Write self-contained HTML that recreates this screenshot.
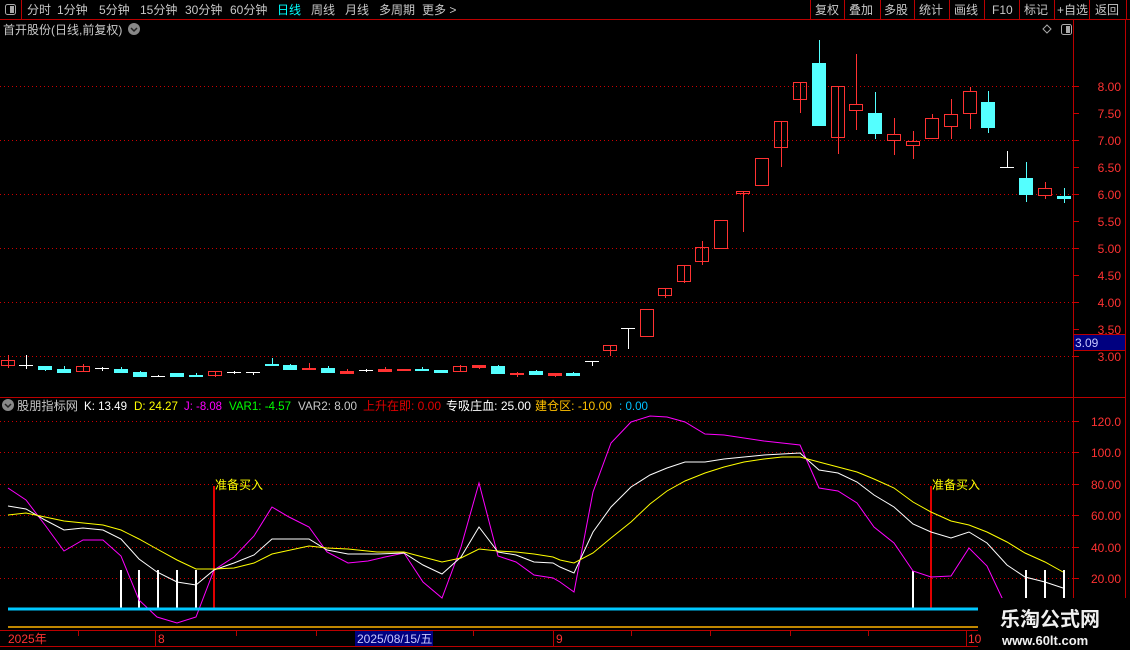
<!DOCTYPE html>
<html><head><meta charset="utf-8"><style>
html,body{margin:0;padding:0;background:#000;}
body{width:1130px;height:650px;overflow:hidden;position:relative;font-family:"Liberation Sans","Noto Sans CJK SC",sans-serif;}
svg{position:absolute;left:0;top:0;}
text{font-family:"Liberation Sans","Noto Sans CJK SC",sans-serif;}
</style></head><body>
<svg width="1130" height="650" viewBox="0 0 1130 650" xmlns="http://www.w3.org/2000/svg">
<rect width="1130" height="650" fill="#000"/>
<line x1="0" y1="19.5" x2="1130" y2="19.5" stroke="#b00" />
<line x1="21.5" y1="0" x2="21.5" y2="19" stroke="#b00"/>
<rect x="5.5" y="4.5" width="10" height="10" rx="2" fill="none" stroke="#aaa"/>
<rect x="10" y="6" width="4" height="7" fill="#aaa"/>
<g font-size="12" fill="#c8c8c8">
<text x="27" y="14">分时</text><text x="57" y="14">1分钟</text><text x="99" y="14">5分钟</text><text x="140" y="14">15分钟</text><text x="185" y="14">30分钟</text><text x="230" y="14">60分钟</text>
<text x="277" y="14" fill="#00ffff">日线</text><text x="311" y="14">周线</text><text x="345" y="14">月线</text><text x="379" y="14">多周期</text><text x="422" y="14">更多 &gt;</text>
</g>
<g stroke="#b00">
<line x1="810.5" y1="0" x2="810.5" y2="19"/><line x1="844.5" y1="0" x2="844.5" y2="19"/><line x1="880.5" y1="0" x2="880.5" y2="19"/><line x1="914.5" y1="0" x2="914.5" y2="19"/><line x1="949.5" y1="0" x2="949.5" y2="19"/><line x1="984.5" y1="0" x2="984.5" y2="19"/><line x1="1019.5" y1="0" x2="1019.5" y2="19"/><line x1="1054.5" y1="0" x2="1054.5" y2="19"/><line x1="1089.5" y1="0" x2="1089.5" y2="19"/><line x1="1126.5" y1="0" x2="1126.5" y2="19"/>
</g>
<g font-size="12" fill="#c8c8c8">
<text x="815" y="14">复权</text><text x="849" y="14">叠加</text><text x="884" y="14">多股</text><text x="919" y="14">统计</text><text x="954" y="14">画线</text><text x="992" y="14">F10</text><text x="1024" y="14">标记</text><text x="1057" y="14">+自选</text><text x="1095" y="14">返回</text>
</g>
<text x="3" y="34" font-size="12" fill="#c8c8c8">首开股份(日线,前复权)</text>
<circle cx="134" cy="29" r="6" fill="#888"/><path d="M131 28 L134 31 L137 28" stroke="#222" stroke-width="1.5" fill="none"/>
<path d="M1047 25 L1051 29 L1047 33 L1043 29 Z" fill="none" stroke="#aaa"/>
<rect x="1061.5" y="24.5" width="10" height="10" rx="2" fill="none" stroke="#aaa"/><rect x="1066" y="26" width="4" height="7" fill="#aaa"/>
<line x1="1073.5" y1="20" x2="1073.5" y2="631" stroke="#b00"/>
<line x1="1125.5" y1="20" x2="1125.5" y2="631" stroke="#b00"/>
<line x1="0" y1="397.5" x2="1126" y2="397.5" stroke="#b00"/>
<line x1="0" y1="630.5" x2="1130" y2="630.5" stroke="#b00"/>
<g stroke="#c00" stroke-dasharray="1 3">
<line x1="0" y1="86.5" x2="1073" y2="86.5"/><line x1="0" y1="140.5" x2="1073" y2="140.5"/><line x1="0" y1="194.5" x2="1073" y2="194.5"/><line x1="0" y1="248.5" x2="1073" y2="248.5"/><line x1="0" y1="302.5" x2="1073" y2="302.5"/><line x1="0" y1="356.5" x2="1073" y2="356.5"/>
<line x1="0" y1="421.5" x2="1073" y2="421.5"/><line x1="0" y1="452.5" x2="1073" y2="452.5"/><line x1="0" y1="484.5" x2="1073" y2="484.5"/><line x1="0" y1="515.5" x2="1073" y2="515.5"/><line x1="0" y1="547.5" x2="1073" y2="547.5"/><line x1="0" y1="578.5" x2="1073" y2="578.5"/>
</g>
<g stroke="#c00">
<line x1="1073" y1="86.5" x2="1079" y2="86.5"/><line x1="1073" y1="113.5" x2="1079" y2="113.5"/><line x1="1073" y1="140.5" x2="1079" y2="140.5"/><line x1="1073" y1="167.5" x2="1079" y2="167.5"/><line x1="1073" y1="194.5" x2="1079" y2="194.5"/><line x1="1073" y1="221.5" x2="1079" y2="221.5"/><line x1="1073" y1="248.5" x2="1079" y2="248.5"/><line x1="1073" y1="275.5" x2="1079" y2="275.5"/><line x1="1073" y1="302.5" x2="1079" y2="302.5"/><line x1="1073" y1="329.5" x2="1079" y2="329.5"/><line x1="1073" y1="356.5" x2="1079" y2="356.5"/>
<line x1="1073" y1="421.5" x2="1079" y2="421.5"/><line x1="1073" y1="452.5" x2="1079" y2="452.5"/><line x1="1073" y1="484.5" x2="1079" y2="484.5"/><line x1="1073" y1="515.5" x2="1079" y2="515.5"/><line x1="1073" y1="547.5" x2="1079" y2="547.5"/><line x1="1073" y1="578.5" x2="1079" y2="578.5"/>
</g>
<g font-size="12" fill="#ff3232" text-anchor="end">
<text x="1121" y="91">8.00</text><text x="1121" y="118">7.50</text><text x="1121" y="145">7.00</text><text x="1121" y="172">6.50</text><text x="1121" y="199">6.00</text><text x="1121" y="226">5.50</text><text x="1121" y="253">5.00</text><text x="1121" y="280">4.50</text><text x="1121" y="307">4.00</text><text x="1121" y="334">3.50</text><text x="1121" y="361">3.00</text>
<text x="1121" y="426">120.0</text><text x="1121" y="457">100.0</text><text x="1121" y="489">80.00</text><text x="1121" y="520">60.00</text><text x="1121" y="552">40.00</text><text x="1121" y="583">20.00</text>
</g>
<rect x="1073.5" y="334.5" width="52" height="16" fill="#000080" stroke="#b00"/>
<text x="1075" y="347" font-size="12" fill="#c8c8ff">3.09</text>
<g stroke-width="1" shape-rendering="crispEdges">
<g stroke="#ff3232" fill="none">
<line x1="8.5" y1="355" x2="8.5" y2="368"/><rect x="1.5" y="360.5" width="13" height="5"/>
<line x1="83.5" y1="364" x2="83.5" y2="372"/><rect x="76.5" y="366.5" width="13" height="5"/>
<line x1="215.5" y1="371" x2="215.5" y2="377"/><rect x="208.5" y="371.5" width="13" height="4"/>
<line x1="460.5" y1="365" x2="460.5" y2="372"/><rect x="453.5" y="366.5" width="13" height="5"/>
<line x1="610.5" y1="345" x2="610.5" y2="356"/><rect x="603.5" y="345.5" width="13" height="5"/>
<rect x="640.5" y="309.5" width="13" height="27"/>
<line x1="665.5" y1="288" x2="665.5" y2="298"/><rect x="658.5" y="288.5" width="13" height="7"/>
<line x1="684.5" y1="265" x2="684.5" y2="283"/><rect x="677.5" y="265.5" width="13" height="16"/>
<line x1="702.5" y1="241" x2="702.5" y2="265"/><rect x="695.5" y="247.5" width="13" height="14"/>
<rect x="714.5" y="220.5" width="13" height="28"/>
<line x1="743.5" y1="191" x2="743.5" y2="232"/><rect x="736.5" y="191.5" width="13" height="2"/>
<rect x="755.5" y="158.5" width="13" height="27"/>
<line x1="781.5" y1="121" x2="781.5" y2="167"/><rect x="774.5" y="121.5" width="13" height="26"/>
<line x1="800.5" y1="82" x2="800.5" y2="113"/><rect x="793.5" y="82.5" width="13" height="17"/>
<line x1="838.5" y1="86" x2="838.5" y2="154"/><rect x="831.5" y="86.5" width="13" height="51"/>
<line x1="856.5" y1="54" x2="856.5" y2="130"/><rect x="849.5" y="104.5" width="13" height="6" fill="#000"/>
<line x1="894.5" y1="118" x2="894.5" y2="155"/><rect x="887.5" y="134.5" width="13" height="6" fill="#000"/>
<line x1="913.5" y1="131" x2="913.5" y2="159"/><rect x="906.5" y="141.5" width="13" height="4" fill="#000"/>
<line x1="932.5" y1="114" x2="932.5" y2="138"/><rect x="925.5" y="118.5" width="13" height="20" fill="#000"/>
<line x1="951.5" y1="99" x2="951.5" y2="139"/><rect x="944.5" y="114.5" width="13" height="12" fill="#000"/>
<line x1="970.5" y1="87" x2="970.5" y2="129"/><rect x="963.5" y="91.5" width="13" height="22" fill="#000"/>
<line x1="1045.5" y1="182" x2="1045.5" y2="199"/><rect x="1038.5" y="188.5" width="13" height="7" fill="#000"/>
</g>
<g fill="#ff3232" stroke="#ff3232">
<line x1="309.5" y1="363" x2="309.5" y2="369"/><rect x="302.5" y="368.5" width="13" height="1"/>
<line x1="347.5" y1="369" x2="347.5" y2="373"/><rect x="340.5" y="371.5" width="13" height="2"/>
<line x1="385.5" y1="367" x2="385.5" y2="371"/><rect x="378.5" y="369.5" width="13" height="2"/>
<line x1="404.5" y1="369" x2="404.5" y2="371"/><rect x="397.5" y="369.5" width="13" height="1"/>
<line x1="479.5" y1="365" x2="479.5" y2="369"/><rect x="472.5" y="365.5" width="13" height="2"/>
<line x1="517.5" y1="372" x2="517.5" y2="377"/><rect x="510.5" y="373.5" width="13" height="1"/>
<line x1="555.5" y1="373" x2="555.5" y2="377"/><rect x="548.5" y="373.5" width="13" height="2"/>
</g>
<g fill="#54ffff" stroke="#54ffff">
<line x1="45.5" y1="366" x2="45.5" y2="371"/><rect x="38.5" y="366.5" width="13" height="3"/>
<line x1="64.5" y1="366" x2="64.5" y2="372"/><rect x="57.5" y="369.5" width="13" height="3"/>
<line x1="121.5" y1="367" x2="121.5" y2="372"/><rect x="114.5" y="369.5" width="13" height="3"/>
<line x1="140.5" y1="371" x2="140.5" y2="377"/><rect x="133.5" y="372.5" width="13" height="4"/>
<line x1="177.5" y1="373" x2="177.5" y2="377"/><rect x="170.5" y="373.5" width="13" height="3"/>
<line x1="196.5" y1="373" x2="196.5" y2="376"/><rect x="189.5" y="375.5" width="13" height="1"/>
<line x1="272.5" y1="358" x2="272.5" y2="366"/><rect x="265.5" y="364.5" width="13" height="1"/>
<line x1="290.5" y1="364" x2="290.5" y2="369"/><rect x="283.5" y="365.5" width="13" height="4"/>
<line x1="328.5" y1="366" x2="328.5" y2="372"/><rect x="321.5" y="368.5" width="13" height="4"/>
<line x1="422.5" y1="367" x2="422.5" y2="371"/><rect x="415.5" y="369.5" width="13" height="1"/>
<line x1="441.5" y1="370" x2="441.5" y2="373"/><rect x="434.5" y="370.5" width="13" height="2"/>
<line x1="498.5" y1="365" x2="498.5" y2="373"/><rect x="491.5" y="366.5" width="13" height="7"/>
<line x1="536.5" y1="370" x2="536.5" y2="375"/><rect x="529.5" y="371.5" width="13" height="3"/>
<line x1="573.5" y1="372" x2="573.5" y2="375"/><rect x="566.5" y="373.5" width="13" height="2"/>
<line x1="819.5" y1="40" x2="819.5" y2="126"/><rect x="812.5" y="63.5" width="13" height="62"/>
<line x1="875.5" y1="92" x2="875.5" y2="139"/><rect x="868.5" y="113.5" width="13" height="20"/>
<line x1="988.5" y1="91" x2="988.5" y2="133"/><rect x="981.5" y="102.5" width="13" height="25"/>
<line x1="1026.5" y1="162" x2="1026.5" y2="202"/><rect x="1019.5" y="178.5" width="13" height="16"/>
<line x1="1064.5" y1="188" x2="1064.5" y2="203"/><rect x="1057.5" y="196.5" width="13" height="2"/>
</g>
<g stroke="#fff">
<line x1="26.5" y1="355" x2="26.5" y2="369"/><line x1="19" y1="365.5" x2="33" y2="365.5"/>
<line x1="102.5" y1="367" x2="102.5" y2="371"/><line x1="95" y1="368.5" x2="109" y2="368.5"/>
<line x1="158.5" y1="375" x2="158.5" y2="377"/><line x1="151" y1="376.5" x2="165" y2="376.5"/>
<line x1="234.5" y1="371" x2="234.5" y2="374"/><line x1="227" y1="372.5" x2="241" y2="372.5"/>
<line x1="253.5" y1="372" x2="253.5" y2="375"/><line x1="246" y1="372.5" x2="260" y2="372.5"/>
<line x1="366.5" y1="369" x2="366.5" y2="372"/><line x1="359" y1="370.5" x2="373" y2="370.5"/>
<line x1="592.5" y1="362" x2="592.5" y2="366"/><line x1="585" y1="361.5" x2="599" y2="361.5"/>
<line x1="628.5" y1="328" x2="628.5" y2="349"/><line x1="621" y1="328.5" x2="635" y2="328.5"/>
<line x1="1007.5" y1="151" x2="1007.5" y2="167"/><line x1="1000" y1="167.5" x2="1014" y2="167.5"/>
</g>
</g>
<circle cx="8" cy="405" r="6" fill="#888"/><path d="M5 404 L8 407 L11 404" stroke="#222" stroke-width="1.5" fill="none"/>
<g font-size="12">
<text x="17" y="410" fill="#c8c8c8" textLength="61" lengthAdjust="spacingAndGlyphs">股朋指标网</text>
<text x="84" y="410" fill="#fff" textLength="43" lengthAdjust="spacingAndGlyphs">K: 13.49</text>
<text x="134" y="410" fill="#ffff00" textLength="44" lengthAdjust="spacingAndGlyphs">D: 24.27</text>
<text x="184" y="410" fill="#ff00ff" textLength="38" lengthAdjust="spacingAndGlyphs">J: -8.08</text>
<text x="229" y="410" fill="#00ff00" textLength="62" lengthAdjust="spacingAndGlyphs">VAR1: -4.57</text>
<text x="298" y="410" fill="#c8c8c8" textLength="59" lengthAdjust="spacingAndGlyphs">VAR2: 8.00</text>
<text x="363" y="410" fill="#e00000" textLength="78" lengthAdjust="spacingAndGlyphs">上升在即: 0.00</text>
<text x="446" y="410" fill="#fff" textLength="85" lengthAdjust="spacingAndGlyphs">专吸庄血: 25.00</text>
<text x="535" y="410" fill="#ffc000" textLength="77" lengthAdjust="spacingAndGlyphs">建仓区: -10.00</text>
<text x="619" y="410" fill="#00c0ff" textLength="29" lengthAdjust="spacingAndGlyphs">: 0.00</text>
</g>
<g stroke="#fff" stroke-width="2">
<line x1="121" y1="570" x2="121" y2="609"/><line x1="139" y1="570" x2="139" y2="609"/><line x1="158" y1="570" x2="158" y2="609"/><line x1="177" y1="570" x2="177" y2="609"/><line x1="196" y1="570" x2="196" y2="609"/>
<line x1="913" y1="571" x2="913" y2="609"/><line x1="1026" y1="570" x2="1026" y2="600"/><line x1="1045" y1="570" x2="1045" y2="600"/><line x1="1064" y1="570" x2="1064" y2="600"/>
</g>
<line x1="214" y1="486" x2="214" y2="609" stroke="#e00000" stroke-width="2"/>
<line x1="931" y1="486" x2="931" y2="609" stroke="#e00000" stroke-width="2"/>
<text x="215" y="489" font-size="12" fill="#ffff00">准备买入</text>
<text x="932" y="489" font-size="12" fill="#ffff00">准备买入</text>
<g fill="none" stroke-width="1">
<polyline stroke="#ff00ff" points="8,488 26,500 45,525 64,551 83,540 103,540 121,556 139,600 157,617 177,623 196,617 214,570 234,557 254,536 272,507 289,517 309,527 327,552 348,563 368,561 385,557 404,553 423,582 442,598 461,547 479,483 498,556 516,562 534,575 553,578 560,582 574,592 593,492 611,443 631,422 650,416 667,417 685,422 705,434 724,435 744,438 764,441 782,443 800,445 819,488 838,491 857,503 874,527 894,543 913,571 931,577 951,576 969,548 987,566 1003,600"/>
<polyline stroke="#fff" points="8,506 26,509 45,520 64,530 83,528 103,530 121,539 139,559 157,572 177,582 196,585 214,570 234,563 254,555 272,539 309,539 327,550 348,554 377,554 404,553 423,565 442,574 461,557 479,527 498,552 516,555 534,562 553,563 560,567 574,573 593,532 611,507 631,487 650,475 667,468 685,462 705,462 724,459 744,457 764,455 782,454 800,453 819,470 838,473 857,482 874,495 894,507 913,524 931,532 951,538 969,532 987,543 1007,565 1025,577 1045,582 1063,588"/>
<polyline stroke="#ffff00" points="8,515 26,513 45,517 64,521 103,525 121,530 139,539 157,549 177,560 196,569 214,569 234,568 254,563 272,554 309,546 327,548 348,549 377,552 404,552 423,557 442,562 461,558 479,549 498,551 516,552 534,554 553,557 560,560 574,563 593,553 611,538 631,522 650,504 667,491 685,481 705,473 724,467 744,462 764,459 782,457 800,457 819,462 838,467 857,472 874,479 894,488 913,502 931,512 951,521 969,525 987,532 1007,542 1025,553 1045,562 1063,572"/>
</g>
<line x1="8" y1="609" x2="978" y2="609" stroke="#00c8ff" stroke-width="3"/>
<line x1="8" y1="627" x2="978" y2="627" stroke="#ffb400" stroke-width="1.5"/>
<rect x="978" y="598" width="152" height="52" fill="#000"/>
<text x="1000" y="626" font-size="20" font-weight="bold" fill="#f0f0f0">乐淘公式网</text>
<text x="1002" y="645" font-size="13" font-weight="bold" fill="#f0f0f0" font-family="Liberation Serif,serif">www.60lt.com</text>
<g stroke="#b00"><line x1="78.5" y1="631" x2="78.5" y2="636"/><line x1="155.5" y1="631" x2="155.5" y2="646"/><line x1="236.5" y1="631" x2="236.5" y2="636"/><line x1="316.5" y1="631" x2="316.5" y2="636"/><line x1="473.5" y1="631" x2="473.5" y2="636"/><line x1="553.5" y1="631" x2="553.5" y2="646"/><line x1="631.5" y1="631" x2="631.5" y2="636"/><line x1="710.5" y1="631" x2="710.5" y2="636"/><line x1="790.5" y1="631" x2="790.5" y2="636"/><line x1="868.5" y1="631" x2="868.5" y2="636"/><line x1="966.5" y1="631" x2="966.5" y2="646"/><line x1="0" y1="646.5" x2="978" y2="646.5"/></g>
<g font-size="12" fill="#ff3232"><text x="8" y="643">2025年</text><text x="158" y="643">8</text><text x="556" y="643">9</text><text x="968" y="643">10</text></g>
<rect x="355" y="631" width="78" height="15" fill="#000080"/>
<text x="357" y="643" font-size="12" fill="#c8c8ff">2025/08/15/五</text>
</svg>
</body></html>
